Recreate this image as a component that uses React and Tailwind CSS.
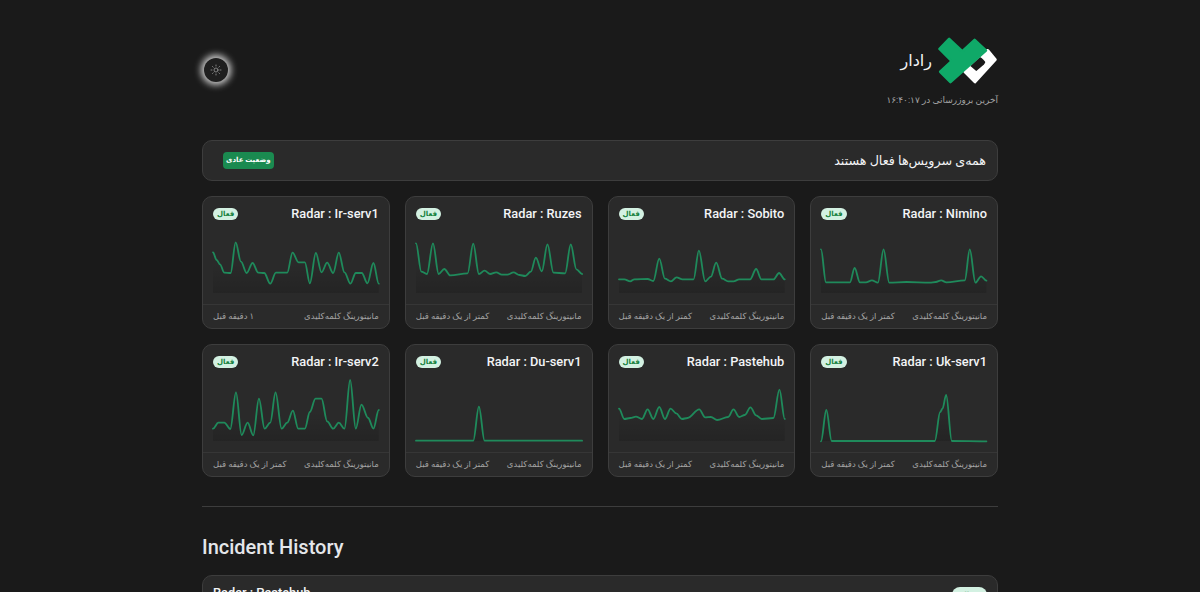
import React from 'react';
import { Sun } from 'lucide-react';

// points were read off the reference at 3x, origin is where each chart starts
const services = [
  { name: 'Nimino', ago: 'کمتر از یک دقیقه قبل', ox: 63, oy: 300, pts: [[63,358],[78,457],[150,457],[164,414],[180,457],[198,457],[216,451],[234,458],[251,358],[268,458],[320,456],[390,458],[408,456],[424,451],[440,457],[495,451],[510,358],[527,458],[544,439],[560,452]] },
  { name: 'Sobito', ago: 'کمتر از یک دقیقه قبل', ox: 54, oy: 120, pts: [[54,268],[70,268],[88,274],[100,268],[140,267],[157,273],[175,206],[192,266],[210,274],[227,262],[245,268],[278,268],[294,182],[313,274],[330,260],[346,218],[364,266],[382,274],[398,274],[415,268],[448,268],[466,237],[482,268],[518,268],[535,249],[552,268]] },
  { name: 'Ruzes', ago: 'کمتر از یک دقیقه قبل', ox: 47, oy: 120, pts: [[47,160],[63,245],[80,252],[98,160],[115,252],[132,237],[150,256],[202,250],[219,161],[236,252],[253,242],[270,252],[288,247],[305,254],[322,254],[340,247],[358,255],[375,258],[392,245],[407,203],[425,244],[442,163],[460,248],[495,250],[512,163],[529,238],[546,252]] },
  { name: 'Ir-serv1', ago: '۱ دقیقه قبل', ox: 54, oy: 285, pts: [[54,352],[65,375],[75,388],[88,413],[107,414],[122,322],[138,380],[155,414],[173,384],[190,413],[208,414],[226,446],[243,413],[277,413],[293,353],[311,382],[330,382],[345,445],[363,354],[380,412],[397,383],[415,414],[432,353],[449,412],[467,446],[483,414],[501,414],[518,445],[536,384],[552,446]] },
  { name: 'Uk-serv1', ago: 'کمتر از یک دقیقه قبل', ox: 63, oy: 120, pts: [[63,310],[79,216],[95,309],[405,309],[421,222],[428,212],[439,171],[456,309],[560,310]] },
  { name: 'Pastehub', ago: 'کمتر از یک دقیقه قبل', ox: 54, oy: 120, pts: [[54,212],[70,243],[88,240],[105,236],[123,243],[140,214],[157,243],[175,207],[192,243],[209,212],[226,226],[243,243],[260,240],[295,214],[313,238],[330,237],[349,246],[382,237],[398,214],[415,237],[432,231],[449,208],[466,232],[483,243],[518,240],[536,155],[552,243]] },
  { name: 'Du-serv1', ago: 'کمتر از یک دقیقه قبل', ox: 47, oy: 120, pts: [[47,308],[219,308],[236,206],[253,308],[546,308]] },
  { name: 'Ir-serv2', ago: 'کمتر از یک دقیقه قبل', ox: 54, oy: 120, pts: [[54,272],[70,254],[88,254],[106,273],[123,163],[140,291],[158,254],[175,292],[192,182],[209,272],[226,254],[242,163],[260,272],[277,254],[294,218],[310,272],[330,272],[345,222],[362,182],[380,182],[397,250],[415,272],[432,254],[449,272],[466,126],[483,272],[500,200],[520,240],[536,272],[552,216]] },
];

const linePath = (pts) => {
  let d = `M${pts[0][0]} ${pts[0][1]}`;
  for (let i = 1; i < pts.length; i++) {
    const [x0, y0] = pts[i - 1];
    const [x1, y1] = pts[i];
    const k = (x1 - x0) * 0.35;
    d += `C${x0 + k} ${y0} ${x1 - k} ${y1} ${x1} ${y1}`;
  }
  return d;
};

const Chart = ({ id, ox, oy, pts }) => {
  const local = pts.map(([x, y]) => [x - ox, y - oy]);
  const line = linePath(local);
  const last = local[local.length - 1];
  return (
    <svg viewBox="0 0 498 189" className="block w-full h-[63px] overflow-visible" preserveAspectRatio="none">
      <defs>
        <linearGradient id={id} gradientUnits="userSpaceOnUse" x1="0" y1="100" x2="0" y2="189">
          <stop offset="0" stopColor="#000" stopOpacity="0" />
          <stop offset="1" stopColor="#000" stopOpacity="0.14" />
        </linearGradient>
      </defs>
      <path d={`${line}L${last[0]} 189L${local[0][0]} 189Z`} fill={`url(#${id})`} />
      <path d={line} fill="none" stroke="#1f8a5b" strokeWidth="5.5" strokeLinejoin="round" strokeLinecap="round" />
    </svg>
  );
};

const Logo = () => (
  <svg viewBox="235 50 180 142" className="w-[60px] h-[47px]">
    <path fillRule="evenodd" fill="#fff" stroke="#fff" strokeWidth="8" strokeLinejoin="round"
      d="M385 90L408 118L346 186L315 155L350 100ZM360 106Q368 108 380 122Q384 128 376 136L350 158L326 138Z" />
    <path d="M268 56L239 86L302 149L334 118Z" fill="#0fa968" stroke="#0fa968" strokeWidth="8" strokeLinejoin="round" />
    <path d="M345 59L379 91L272 186L241 155Z" fill="#0fa968" stroke="#0fa968" strokeWidth="8" strokeLinejoin="round" />
  </svg>
);

const Pill = ({ wide }) => (
  <span className={wide
    ? 'rounded-full bg-[#d3f1e2] text-[#15803d] text-[7px] font-bold leading-[16px] h-4 px-[9px]'
    : 'rounded-full bg-[#d3f1e2] text-[#15803d] text-[7px] font-bold leading-[12px] h-3 px-[4px]'}>فعال</span>
);

const ServiceCard = ({ service }) => (
  <div className="h-[133px] bg-[#2a2a2a] border border-[#3d3d3d] rounded-[10px] flex flex-col">
    <div className="flex justify-between items-center h-[33px] px-[10px]">
      <span dir="ltr" className="text-[12.8px] font-medium text-[#f3f4f6]">Radar : {service.name}</span>
      <Pill />
    </div>
    <div className="px-[10px] h-[74px]">
      <Chart id={`area-${service.name}`} ox={service.ox} oy={service.oy} pts={service.pts} />
    </div>
    <div className="flex-1 border-t border-[#363636] flex justify-between items-center px-[10px] text-[8.5px] text-[#a3a3a3] whitespace-nowrap">
      <span>مانیتورینگ کلمه‌کلیدی</span>
      <span>{service.ago}</span>
    </div>
  </div>
);

export default function App() {
  return (
    <div dir="rtl" className="h-screen overflow-hidden bg-[#1a1a1a] font-[Roboto,'DejaVu_Sans',sans-serif] text-white">
      <div className="w-[796px] mx-auto pt-[37px]">
        <header className="flex justify-between items-start h-[103px]">
          <div>
            <div className="flex items-center gap-[6px]">
              <Logo />
              <span className="text-[16px] font-normal text-[#f3f4f6]">رادار</span>
            </div>
            <p className="mt-[10px] text-[9px] text-[#a3a3a3]">آخرین بروزرسانی در ۱۶:۴۰:۱۷</p>
          </div>
          <button className="mt-[21px] ml-[2px] w-6 h-6 rounded-full bg-[#1f1f1f] shadow-[0_0_7px_3px_rgba(255,255,255,0.8)] flex items-center justify-center">
            <Sun size={12} strokeWidth={1.5} className="text-[#a3a3a3]" />
          </button>
        </header>

        <div className="h-[41px] bg-[#2a2a2a] border border-[#3d3d3d] rounded-[10px] flex justify-between items-center pr-[11px] pl-[20px]">
          <h2 className="text-[12.7px] font-normal text-[#f3f4f6]">همه‌ی سرویس‌ها فعال هستند</h2>
          <span className="bg-[#1a8a50] text-white text-[7px] font-bold rounded px-[3px] h-[17px] leading-[17px]">وضعیت عادی</span>
        </div>

        <div className="grid grid-cols-4 gap-[15px] mt-[15px]">
          {services.map((s) => (
            <ServiceCard key={s.name} service={s} />
          ))}
        </div>

        <hr className="mt-[29px] border-[#3d3d3d]" />

        <h2 dir="ltr" className="mt-[26px] text-[20px] font-medium text-[#e5e7eb] leading-[28px]">Incident History</h2>

        <div dir="ltr" className="mt-[14px] h-[80px] bg-[#2a2a2a] border border-[#3d3d3d] rounded-[10px] flex justify-between items-start pt-[7px] px-[10px]">
          <span className="text-[12.8px] font-medium text-[#f3f4f6]">Radar : Pastehub</span>
          <span className="mt-[4px] flex"><Pill wide /></span>
        </div>
      </div>
    </div>
  );
}
